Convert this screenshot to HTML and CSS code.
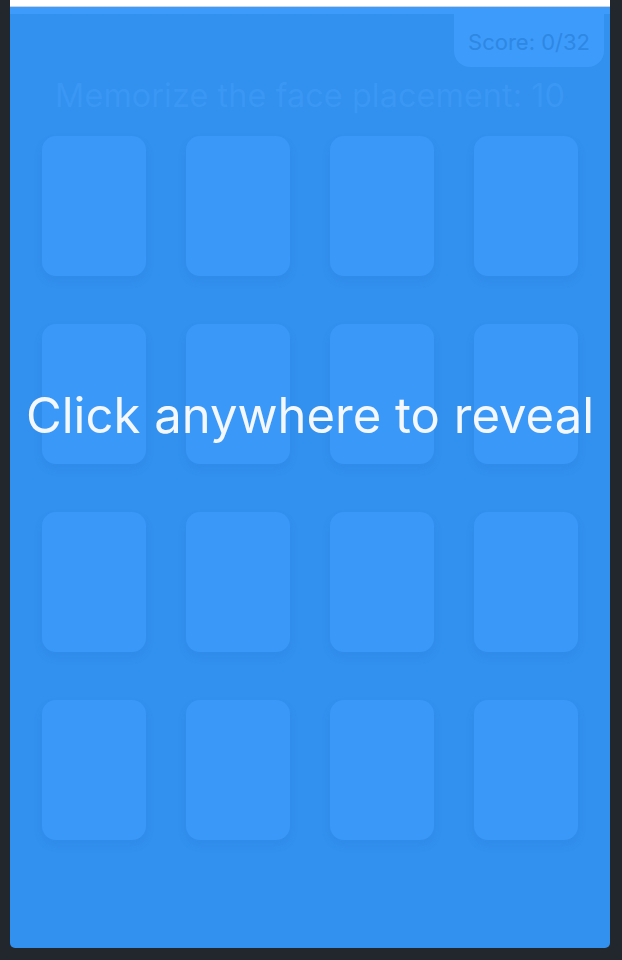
FILE: index.html
```html
<!DOCTYPE html>
<html lang="en">
<head>
<meta charset="utf-8">
<title>Memory Faces</title>
<link rel="stylesheet" href="styles.css">
</head>
<body>
<div class="app">
  <div class="topbar"></div>
  <div class="band"></div>
  <div class="game">
    <div class="score-row">
      <div class="score">Score: 0/32</div>
    </div>
    <h1 class="title">Memorize the face placement: 10</h1>
    <div class="grid">
      <div class="card"></div><div class="card"></div><div class="card"></div><div class="card"></div>
      <div class="card"></div><div class="card"></div><div class="card"></div><div class="card"></div>
      <div class="card"></div><div class="card"></div><div class="card"></div><div class="card"></div>
      <div class="card"></div><div class="card"></div><div class="card"></div><div class="card"></div>
    </div>
  </div>
  <div class="overlay">Click anywhere to reveal</div>
</div>
</body>
</html>
```
FILE: styles.css
```css
html, body {
  margin: 0;
  padding: 0;
  background: #22262d;
  font-family: Inter, Roboto, "Liberation Sans", sans-serif;
}
.app {
  position: relative;
  margin: 0 12px 0 10px;
  height: 948px;
  background: #3290ee;
  border-radius: 0 0 5px 5px;
  overflow: hidden;
}
.topbar {
  height: 6px;
  background: #ffffff;
  border-bottom: 1px solid #cfd3d8;
}
.band {
  height: 7px;
  background: #3d9bfb;
}
.game {
  display: flex;
  flex-direction: column;
  align-items: center;
}
.score-row {
  align-self: stretch;
  display: flex;
  justify-content: flex-end;
  padding-right: 6px;
}
.score {
  width: 150px;
  height: 53px;
  box-sizing: border-box;
  padding-top: 2px;
  background: #3d9bfb;
  border-radius: 0 0 16px 16px;
  color: #2e87e2;
  font-size: 22px;
  display: flex;
  align-items: center;
  justify-content: center;
}
.title {
  margin: 8px 0 0;
  font-weight: 400;
  font-size: 32.5px;
  line-height: 42px;
  color: #3a97f4;
}
.grid {
  margin-top: 19px;
  display: grid;
  grid-template-columns: repeat(4, 104px);
  grid-auto-rows: 140px;
  column-gap: 40px;
  row-gap: 48px;
}
.card {
  background: #3a98f9;
  border-radius: 14px;
  box-shadow: 0 5px 8px rgba(30, 110, 200, 0.12);
}
.overlay {
  position: absolute;
  left: 0;
  right: 0;
  top: 385px;
  text-align: center;
  color: #f4f8fd;
  font-size: 49px;
  line-height: 62px;
}
```
